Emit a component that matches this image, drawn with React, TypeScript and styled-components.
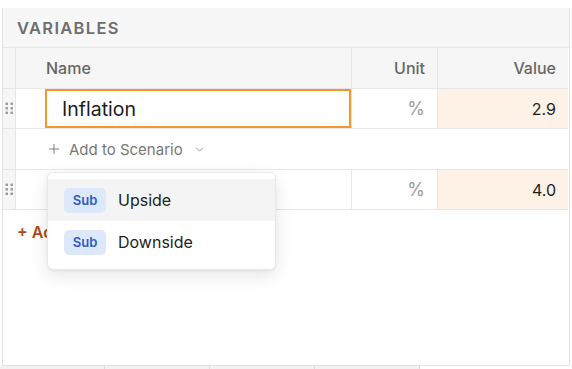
import React from "react";
import styled, { createGlobalStyle } from "styled-components";
import { Plus, ChevronDown } from "lucide-react";

const Global = createGlobalStyle`
  html, body { margin: 0; padding: 0; background: #ffffff; }
  body { font-family: Inter, "Noto Sans", "Liberation Sans", sans-serif; -webkit-font-smoothing: antialiased; }
`;

const Page = styled.div`
  width: 572px;
  height: 369px;
  padding: 8px 0 0 2px;
  box-sizing: border-box;
  display: flex;
  flex-direction: column;
  overflow: hidden;
`;

const Panel = styled.div`
  position: relative;
  width: 568px;
  height: 358px;
  box-sizing: border-box;
  border-left: 1px solid #e3e3e3;
  border-right: 1px solid #e3e3e3;
  border-bottom: 1px solid #e3e3e3;
  display: flex;
  flex-direction: column;
`;

const SectionHeader = styled.div`
  height: 40px;
  box-sizing: border-box;
  background: #f7f7f7;
  border-bottom: 1px solid #e6e6e6;
  display: flex;
  align-items: center;
  padding-left: 14px;
  font-size: 16.5px;
  font-weight: 600;
  letter-spacing: 1.3px;
  color: #6e6e6e;
`;

const Grid = styled.div`
  display: grid;
  grid-template-columns: 13px 336px 86px 130px;
`;

const Cell = styled.div<{ $bg?: string; $align?: "left" | "right"; $line?: boolean; $h?: number }>`
  height: ${(p) => p.$h || 40}px;
  box-sizing: border-box;
  border-bottom: 1px solid #e6e6e6;
  border-right: ${(p) => (p.$line ? "1px solid #e6e6e6" : "none")};
  background: ${(p) => p.$bg || "#ffffff"};
  display: flex;
  align-items: center;
  justify-content: ${(p) => (p.$align === "right" ? "flex-end" : "flex-start")};
  padding-right: ${(p) => (p.$align === "right" ? "12px" : "0")};
  min-width: 0;
`;

const HeadText = styled.span<{ $pl?: number }>`
  font-size: 16px;
  font-weight: 500;
  color: #666;
  padding-left: ${(p) => p.$pl || 0}px;
`;

const Handle = styled(Cell)`
  background: #f6f6f6;
  justify-content: center;
  padding: 0;
`;

const NameInput = styled.div`
  margin-left: 29px;
  width: 306px;
  height: 39px;
  box-sizing: border-box;
  border: 2px solid #f1972e;
  display: flex;
  align-items: center;
  padding-left: 15px;
  font-size: 19.5px;
  color: #1c1c1c;
`;

const UnitText = styled.span`
  font-size: 18px;
  color: #9c9c9c;
`;

const ValueText = styled.span`
  font-size: 16px;
  color: #1e1e1e;
`;

const AddRow = styled.div`
  grid-column: 2 / 5;
  height: 41px;
  box-sizing: border-box;
  border-bottom: 1px solid #e6e6e6;
  display: flex;
  align-items: center;
  padding-left: 30px;
  gap: 7px;
  font-size: 15px;
  color: #777;
`;

const AddVariable = styled.div`
  margin: 12px 0 0 14px;
  font-size: 16px;
  font-weight: 600;
  color: #a84d17;
`;

const Menu = styled.div`
  position: absolute;
  left: 44px;
  top: 164px;
  width: 229px;
  box-sizing: border-box;
  background: #fff;
  border: 1px solid #e8e8e8;
  border-radius: 6px;
  box-shadow: 0 6px 18px rgba(0, 0, 0, 0.1), 0 1px 3px rgba(0, 0, 0, 0.05);
  padding: 6px 0;
  display: flex;
  flex-direction: column;
`;

const MenuItem = styled.div<{ $active?: boolean }>`
  height: 42px;
  display: flex;
  align-items: center;
  gap: 12px;
  padding-left: 16px;
  background: ${(p) => (p.$active ? "#f4f4f4" : "#fff")};
  font-size: 16px;
  color: #222;
`;

const Badge = styled.span`
  width: 42px;
  height: 25px;
  border-radius: 5px;
  background: #dde9fb;
  color: #2a5ccb;
  font-size: 13px;
  font-weight: 600;
  display: flex;
  align-items: center;
  justify-content: center;
`;

const Footer = styled.div`
  display: flex;
  height: 3px;
  width: 570px;
  margin-left: -2px;
`;

const FooterTab = styled.div`
  width: 104px;
  background: #f2f2f2;
  border-right: 1px solid #d8d8d8;
`;

const Dots = () => (
  <svg width="9" height="13" viewBox="0 0 9 13">
    {[0, 1, 2].map((r) =>
      [0, 1].map((c) => (
        <rect key={`${r}-${c}`} x={0.5 + c * 5} y={0.5 + r * 4.5} width="2.5" height="2.5" rx="0.6" fill="#9a9a9a" />
      ))
    )}
  </svg>
);

const rows = [
  { name: "Inflation", unit: "%", value: "2.9" },
];

export default function App() {
  return (
    <>
      <Global />
      <Page>
        <Panel>
          <SectionHeader>VARIABLES</SectionHeader>
          <Grid>
            <Handle $line $h={41} />
            <Cell $bg="#f6f6f6" $line $h={41}>
              <HeadText $pl={30}>Name</HeadText>
            </Cell>
            <Cell $bg="#f6f6f6" $line $align="right" $h={41}>
              <HeadText>Unit</HeadText>
            </Cell>
            <Cell $bg="#f6f6f6" $align="right" $h={41}>
              <HeadText>Value</HeadText>
            </Cell>

            {rows.map((r) => (
              <React.Fragment key={r.name}>
                <Handle $line>
                  <Dots />
                </Handle>
                <Cell $line>
                  <NameInput>{r.name}</NameInput>
                </Cell>
                <Cell $line $align="right">
                  <UnitText>{r.unit}</UnitText>
                </Cell>
                <Cell $bg="#fdf2e5" $align="right">
                  <ValueText>{r.value}</ValueText>
                </Cell>
              </React.Fragment>
            ))}

            <Handle $line $h={41} />
            <AddRow>
              <Plus size={16} strokeWidth={1.4} color="#777" />
              <span>Add to Scenario</span>
              <ChevronDown size={13} strokeWidth={1.5} color="#888" style={{ marginLeft: 3 }} />
            </AddRow>

            <Handle $line>
              <Dots />
            </Handle>
            <Cell $line />
            <Cell $line $align="right">
              <UnitText>%</UnitText>
            </Cell>
            <Cell $bg="#fdf2e5" $align="right">
              <ValueText>4.0</ValueText>
            </Cell>
          </Grid>
          <AddVariable>+ Add Variable</AddVariable>

          <Menu>
            <MenuItem $active>
              <Badge>Sub</Badge>
              Upside
            </MenuItem>
            <MenuItem>
              <Badge>Sub</Badge>
              Downside
            </MenuItem>
          </Menu>
        </Panel>
        <Footer>
          <FooterTab />
          <FooterTab />
          <FooterTab />
          <FooterTab />
        </Footer>
      </Page>
    </>
  );
}
